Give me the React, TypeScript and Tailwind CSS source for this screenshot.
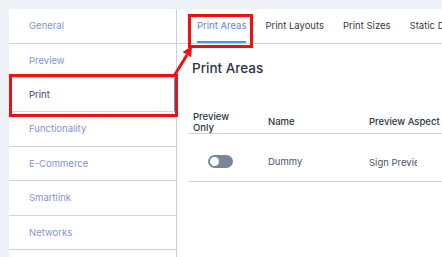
import React from "react";

const navItems = [
  { label: "General", h: "h-[35px]" },
  { label: "Preview", h: "h-[34px]" },
  { label: "Print", h: "h-[34px]", active: true },
  { label: "Functionality", h: "h-[35px]" },
  { label: "E-Commerce", h: "h-[34px]" },
  { label: "Smartlink", h: "h-[35px]" },
  { label: "Networks", h: "h-[34px]" },
];

const tabs = ["Print Areas", "Print Layouts", "Print Sizes", "Static Designs"];

export default function App() {
  return (
    <div
      className="relative w-[442px] h-[257px] overflow-hidden bg-[#eef1f5] pt-[9px] pl-[9px] flex"
      style={{ fontFamily: "Inter, 'Noto Sans', sans-serif" }}
    >
      {/* Sidebar */}
      <div className="w-[168px] shrink-0 bg-white border-r border-[#c9d3e1] flex flex-col">
        {navItems.map((item) => (
          <div
            key={item.label}
            className={`${item.h} shrink-0 flex items-center pl-[20px] pt-[1px] border-b border-[#c9d3e1] text-[9.5px] ${
              item.active ? "text-[#4a3f6b] border-r-2 border-r-[#3d9be9]" : "text-[#8593cc]"
            }`}
          >
            {item.label}
          </div>
        ))}
      </div>

      {/* Main */}
      <div className="flex-1 bg-white flex flex-col min-w-0">
        <div className="h-[35px] shrink-0 border-b border-[#c9d3e1] flex items-stretch pl-[20px] gap-[19px] whitespace-nowrap">
          {tabs.map((t, i) => (
            <div
              key={t}
              className={`flex items-center pt-[3px] text-[9.5px] border-b-2 ${
                i === 0 ? "text-[#5c86e6] border-[#3d9be9]" : "text-[#333a45] border-transparent"
              }`}
            >
              {t}
            </div>
          ))}
        </div>

        <div className="pl-[15px] mt-[15px] text-[13.5px] leading-[18px] font-medium text-[#2b3444]">
          Print Areas
        </div>

        <div className="ml-[11px] mt-[23px] text-[9.5px]">
          <div className="h-[34px] pt-[11px] border-b border-[#c9d3e1] flex items-center font-medium text-[#2b3444] whitespace-nowrap">
            <div className="w-[75px] pl-[5px] leading-[11px]">
              Preview
              <br />
              Only
            </div>
            <div className="w-[104px] pl-[5px]">Name</div>
            <div className="pl-[2px]">Preview Aspect</div>
          </div>
          <div className="h-[48px] border-b border-[#c9d3e1] flex items-center pt-[10px] text-[#4a5264] whitespace-nowrap">
            <div className="w-[75px] pl-[20px] pb-[3px]">
              <div className="w-[25px] h-[13px] rounded-full bg-[#7a879b] flex items-center pl-[2px]">
                <div className="w-[9px] h-[9px] rounded-full bg-white" />
              </div>
            </div>
            <div className="w-[104px] pl-[5px]">Dummy</div>
            <div className="pl-[2px]">
              <span className="inline-block w-[48px] overflow-hidden align-middle">Sign Preview</span>
            </div>
          </div>
        </div>
      </div>

      {/* Annotations */}
      <div className="absolute left-[9px] top-[74px] w-[169px] h-[43px] border-[3px] border-[#ee1111]" />
      <div className="absolute left-[188px] top-[14px] w-[65px] h-[34px] border-[3px] border-[#ee1111]" />
      <svg className="absolute left-0 top-0" width="442" height="257">
        <line x1="174" y1="76" x2="187" y2="55" stroke="#ee1111" strokeWidth="3" />
        <polygon points="192,46 191.2,57.2 182.6,52" fill="#ee1111" />
      </svg>
    </div>
  );
}
